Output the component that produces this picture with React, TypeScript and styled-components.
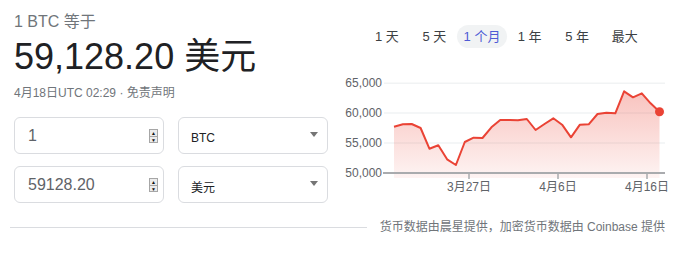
import styled, { createGlobalStyle } from 'styled-components';

const GlobalStyle = createGlobalStyle`
    body {
        margin: 0;
        background: #fff;
        font-family: "Liberation Sans", "Noto Sans CJK SC", sans-serif;
    }
`;

const prices = [
    57720, 58120, 58170, 57500, 54030, 54600, 52250, 51290, 55150, 55870, 55820,
    57620, 58840, 58840, 58790, 59010, 57160, 58170, 59130, 58050, 55940, 58050,
    58120, 59850, 60070, 59970, 63660, 62650, 63320, 61640, 60230,
];

const tabs = ['1 天', '5 天', '1 个月', '1 年', '5 年', '最大'];

const X0 = 394;
const STEP = 8.85;
const yOf = (p: number) => 172.7 - (p - 50000) * 0.00596;

const PriceChart = () => {
    const pts = prices.map((p, i) => [X0 + i * STEP, yOf(p)]);
    const line = pts.map(([x, y], i) => `${i ? 'L' : 'M'}${x.toFixed(1)} ${y.toFixed(1)}`).join(' ');
    const last = pts[pts.length - 1];
    const area = `${line} L${last[0].toFixed(1)} 178 L${X0} 178 Z`;
    const yTicks = [65000, 60000, 55000, 50000];
    const xTicks = [
        { x: 469, label: '3月27日' },
        { x: 558, label: '4月6日' },
        { x: 647, label: '4月16日' },
    ];

    return (
        <ChartSvg viewBox="344 76 335 120" width={335} height={120}>
            <defs>
                <linearGradient id="fillGrad" x1="0" y1="0" x2="0" y2="1">
                    <stop offset="0%" stopColor="#ea4335" stopOpacity="0.32" />
                    <stop offset="100%" stopColor="#ea4335" stopOpacity="0.06" />
                </linearGradient>
            </defs>
            {yTicks.slice(0, 3).map((v) => (
                <line key={v} x1={384} x2={665} y1={yOf(v)} y2={yOf(v)} stroke="#f1f3f4" strokeWidth={1.5} />
            ))}
            <path d={area} fill="url(#fillGrad)" />
            <line x1={383} x2={665} y1={173} y2={173} stroke="#a9abae" strokeWidth={2} />
            {xTicks.map((t) => (
                <line key={t.x} x1={t.x} x2={t.x} y1={173} y2={179} stroke="#a9abae" strokeWidth={1.5} />
            ))}
            <path d={line} fill="none" stroke="#ea4335" strokeWidth={2} strokeLinejoin="round" />
            <circle cx={last[0]} cy={last[1]} r={4.5} fill="#ea4335" />
            {yTicks.map((v) => (
                <AxisText key={v} x={382} y={yOf(v) + 4} textAnchor="end">
                    {v.toLocaleString('en-US')}
                </AxisText>
            ))}
            {xTicks.map((t) => (
                <AxisText key={t.label} x={t.x} y={191} textAnchor="middle">
                    {t.label}
                </AxisText>
            ))}
        </ChartSvg>
    );
};

const NumberBox = ({ value }: { value: string }) => (
    <InputBox>
        <InputText>{value}</InputText>
        <Spinner>
            <SpinHalf>▲</SpinHalf>
            <SpinHalf $bottom>▼</SpinHalf>
        </Spinner>
    </InputBox>
);

const SelectBox = ({ value }: { value: string }) => (
    <Select>
        <SelectText>{value}</SelectText>
        <Arrow />
    </Select>
);

export default function App() {
    return (
        <Page>
            <GlobalStyle />
            <Top>
                <Left>
                    <Label>1 BTC 等于</Label>
                    <BigValue>59,128.20 美元</BigValue>
                    <Stamp>4月18日UTC 02:29 · 免责声明</Stamp>
                    <Rows>
                        <Row>
                            <NumberBox value="1" />
                            <SelectBox value="BTC" />
                        </Row>
                        <Row>
                            <NumberBox value="59128.20" />
                            <SelectBox value="美元" />
                        </Row>
                    </Rows>
                </Left>
                <Right>
                    <Tabs>
                        {tabs.map((t, i) => (
                            <Tab key={t} $active={i === 2}>{t}</Tab>
                        ))}
                    </Tabs>
                    <PriceChart />
                </Right>
            </Top>
            <Footer>
                <Rule />
                <Source>货币数据由晨星提供，加密货币数据由 Coinbase 提供</Source>
            </Footer>
        </Page>
    );
}

const Page = styled.div`
    width: 679px;
    box-sizing: border-box;
    padding: 12px 14px 0 10px;
`;

const Top = styled.div`
    display: grid;
    grid-template-columns: 334px 1fr;
`;

const Left = styled.div`
    padding-left: 4px;
    display: flex;
    flex-direction: column;
`;

const Label = styled.div`
    font-size: 16px;
    line-height: 20px;
    color: #70757a;
`;

const BigValue = styled.div`
    margin-top: 3px;
    font-size: 36px;
    line-height: 44px;
    color: #202124;
`;

const Stamp = styled.div`
    margin-top: 6px;
    font-size: 12px;
    line-height: 16px;
    color: #70757a;
`;

const Rows = styled.div`
    margin-top: 16px;
    display: flex;
    flex-direction: column;
    gap: 12px;
`;

const Row = styled.div`
    display: flex;
    gap: 14px;
`;

const InputBox = styled.div`
    width: 150px;
    height: 37px;
    box-sizing: border-box;
    border: 1px solid #dadce0;
    border-radius: 6px;
    display: flex;
    align-items: center;
    padding: 0 5px 0 13px;
`;

const InputText = styled.span`
    flex: 1;
    font-size: 16px;
    color: #5f6368;
`;

const Spinner = styled.div`
    width: 9px;
    height: 14px;
    margin-top: 1px;
    display: flex;
    flex-direction: column;
    border: 1px solid #a6a6a6;
    box-sizing: border-box;
    background: #ececec;
`;

const SpinHalf = styled.div<{ $bottom?: boolean }>`
    flex: 1;
    font-size: 5px;
    line-height: 6px;
    text-align: center;
    color: #111;
    border-top: ${(p) => (p.$bottom ? '1px solid #a6a6a6' : 'none')};
`;

const Select = styled.div`
    width: 150px;
    height: 37px;
    box-sizing: border-box;
    border: 1px solid #dadce0;
    border-radius: 6px;
    display: flex;
    align-items: center;
    padding: 0 9px 0 12px;
`;

const SelectText = styled.span`
    flex: 1;
    padding-top: 4px;
    font-size: 12px;
    color: #202124;
`;

const Arrow = styled.span`
    width: 0;
    height: 0;
    margin-top: -2px;
    border-left: 4.5px solid transparent;
    border-right: 4.5px solid transparent;
    border-top: 5px solid #757575;
`;

const Right = styled.div`
    display: flex;
    flex-direction: column;
    min-width: 0;
`;

const Tabs = styled.div`
    margin: 13px 0 0 19px;
    display: grid;
    grid-template-columns: repeat(6, 47.6px);
    justify-items: center;
`;

const Tab = styled.div<{ $active?: boolean }>`
    height: 23px;
    padding: 0 7px;
    border-radius: 12px;
    font-size: 13px;
    line-height: 23px;
    white-space: nowrap;
    color: ${(p) => (p.$active ? '#4f5bd5' : '#3c4043')};
    background: ${(p) => (p.$active ? '#f1f3f4' : 'transparent')};
`;

const ChartSvg = styled.svg`
    display: block;
    margin-top: 28px;
`;

const AxisText = styled.text`
    font-size: 12px;
    fill: #5f6368;
    font-family: "Liberation Sans", "Noto Sans CJK SC", sans-serif;
`;

const Footer = styled.div`
    margin-top: 16px;
    display: flex;
    align-items: center;
    gap: 13px;
`;

const Rule = styled.div`
    flex: 1;
    height: 1px;
    background: #dadce0;
`;

const Source = styled.div`
    font-size: 12px;
    line-height: 16px;
    color: #70757a;
    white-space: nowrap;
`;
